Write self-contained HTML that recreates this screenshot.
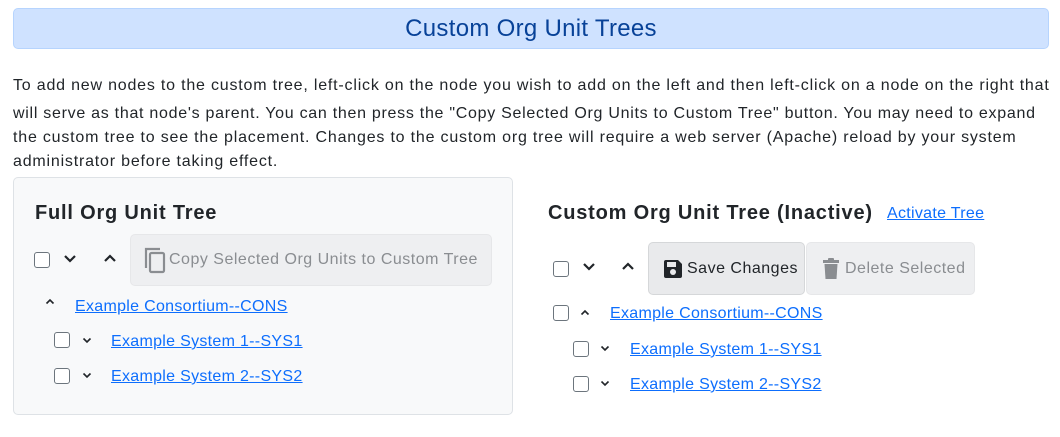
<!DOCTYPE html>
<html><head><meta charset="utf-8"><style>
*{box-sizing:border-box;margin:0;padding:0}
body{width:1060px;height:437px;background:#fff;font-family:"Liberation Sans",sans-serif;color:#212529;position:relative;overflow:hidden}
.a{position:absolute;white-space:nowrap}
.hdr{left:13px;top:8px;width:1036px;height:41px;background:#cfe2ff;border:1px solid #b6d4fe;border-radius:5px;color:#084298;font-size:24px;letter-spacing:0.3px;text-align:center;line-height:39px}
.p{left:13px;font-size:16px;letter-spacing:0.8px;line-height:24px}
.panel{left:13px;top:177px;width:500px;height:238px;background:#f8f9fa;border:1px solid #dee2e6;border-radius:5px}
h3{position:absolute;font-size:20px;font-weight:bold;letter-spacing:0.8px;white-space:nowrap}
.cb{position:absolute;width:16px;height:16px;border:1px solid #6c757d;border-radius:3px;background:#fff}
.lnk{position:absolute;color:#0d6efd;text-decoration:underline;font-size:16px;letter-spacing:0.3px;white-space:nowrap}
.btn{position:absolute;border-radius:5px;font-size:16px;letter-spacing:0.5px;white-space:nowrap;display:flex;align-items:center}
svg{display:block}
</style></head><body>
<div class="a hdr">Custom Org Unit Trees</div>
<div class="a p" style="top:74px">To add new nodes to the custom tree, left-click on the node you wish to add on the left and then left-click on a node on the right that</div>
<div class="a p" style="top:102px;letter-spacing:0.72px">will serve as that node's parent. You can then press the "Copy Selected Org Units to Custom Tree" button. You may need to expand</div>
<div class="a p" style="top:126px">the custom tree to see the placement. Changes to the custom org tree will require a web server (Apache) reload by your system</div>
<div class="a p" style="top:150px">administrator before taking effect.</div>

<div class="a panel"></div>
<h3 style="left:35px;top:202px">Full Org Unit Tree</h3>
<div class="cb" style="left:34px;top:252px"></div>
<svg class="a" style="left:63px;top:254px" width="14" height="10" viewBox="0 0 14 10"><path d="M2 2l5 5 5-5" stroke="#212529" stroke-width="2.2" fill="none"/></svg>
<svg class="a" style="left:103px;top:253px" width="14" height="10" viewBox="0 0 14 10"><path d="M2 8l5-5 5 5" stroke="#212529" stroke-width="2.2" fill="none"/></svg>
<div class="btn" style="left:130px;top:234px;width:362px;height:52px;background:#eeeff1;border:1px solid #e6e7e9;color:#8a8d91;padding-left:12px">
<svg width="24" height="28" viewBox="0 0 24 28"><path d="M3 22V3h14" stroke="#8a8d91" stroke-width="2.2" fill="none"/><rect x="7" y="7" width="14" height="19" rx="1.5" stroke="#8a8d91" stroke-width="2.2" fill="none"/></svg>
<span style="margin-left:2px">Copy Selected Org Units to Custom Tree</span></div>
<svg class="a" style="left:45px;top:298px" width="10" height="7" viewBox="0 0 10 7"><path d="M1.5 5.5l3.5-3.5 3.5 3.5" stroke="#212529" stroke-width="1.6" fill="none"/></svg>
<span class="lnk" style="left:75px;top:298px">Example Consortium--CONS</span>
<div class="cb" style="left:54px;top:332px"></div>
<svg class="a" style="left:82px;top:337px" width="10" height="7" viewBox="0 0 10 7"><path d="M1.5 1.5l3.5 3.5 3.5-3.5" stroke="#212529" stroke-width="1.6" fill="none"/></svg>
<span class="lnk" style="left:111px;top:333px">Example System 1--SYS1</span>
<div class="cb" style="left:54px;top:368px"></div>
<svg class="a" style="left:82px;top:372px" width="10" height="7" viewBox="0 0 10 7"><path d="M1.5 1.5l3.5 3.5 3.5-3.5" stroke="#212529" stroke-width="1.6" fill="none"/></svg>
<span class="lnk" style="left:111px;top:368px">Example System 2--SYS2</span>

<h3 style="left:548px;top:202px">Custom Org Unit Tree (Inactive)</h3>
<span class="lnk" style="left:887px;top:205px">Activate Tree</span>
<div class="cb" style="left:553px;top:261px"></div>
<svg class="a" style="left:582px;top:262px" width="14" height="10" viewBox="0 0 14 10"><path d="M2 2l5 5 5-5" stroke="#212529" stroke-width="2.2" fill="none"/></svg>
<svg class="a" style="left:621px;top:261px" width="14" height="10" viewBox="0 0 14 10"><path d="M2 8l5-5 5 5" stroke="#212529" stroke-width="2.2" fill="none"/></svg>
<div class="btn" style="left:648px;top:242px;width:157px;height:53px;background:#e9eaec;border:1px solid #d5d7d9;color:#212529;padding-left:13px">
<svg width="22" height="22" viewBox="0 0 22 22"><path d="M2 4a2 2 0 0 1 2-2h12l4 4v12a2 2 0 0 1-2 2H4a2 2 0 0 1-2-2z" fill="#212529"/><rect x="5" y="4" width="9" height="5" fill="#e9eaec"/><circle cx="11" cy="14" r="3" fill="#e9eaec"/></svg>
<span style="margin-left:3px">Save Changes</span></div>
<div class="btn" style="left:806px;top:242px;width:169px;height:53px;background:#eeeff1;border:1px solid #e6e7e9;color:#8a8d91;padding-left:15px">
<svg width="18" height="22" viewBox="0 0 18 22"><rect x="1" y="2" width="16" height="3" fill="#8a8d91"/><rect x="6" y="0" width="6" height="3" rx="1" fill="#8a8d91"/><path d="M2.5 6h13l-1 15h-11z" fill="#8a8d91"/></svg>
<span style="margin-left:5px">Delete Selected</span></div>
<div class="cb" style="left:553px;top:305px"></div>
<svg class="a" style="left:580px;top:309px" width="10" height="7" viewBox="0 0 10 7"><path d="M1.5 5.5l3.5-3.5 3.5 3.5" stroke="#212529" stroke-width="1.6" fill="none"/></svg>
<span class="lnk" style="left:610px;top:305px">Example Consortium--CONS</span>
<div class="cb" style="left:573px;top:341px"></div>
<svg class="a" style="left:600px;top:345px" width="10" height="7" viewBox="0 0 10 7"><path d="M1.5 1.5l3.5 3.5 3.5-3.5" stroke="#212529" stroke-width="1.6" fill="none"/></svg>
<span class="lnk" style="left:630px;top:341px">Example System 1--SYS1</span>
<div class="cb" style="left:573px;top:376px"></div>
<svg class="a" style="left:600px;top:380px" width="10" height="7" viewBox="0 0 10 7"><path d="M1.5 1.5l3.5 3.5 3.5-3.5" stroke="#212529" stroke-width="1.6" fill="none"/></svg>
<span class="lnk" style="left:630px;top:376px">Example System 2--SYS2</span>
</body></html>
